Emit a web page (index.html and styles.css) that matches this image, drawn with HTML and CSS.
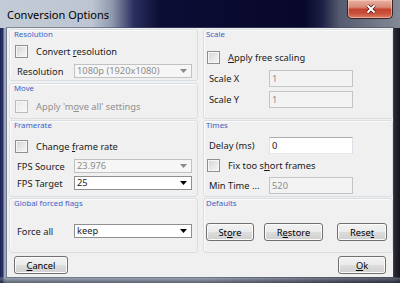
FILE: index.html
```html
<!DOCTYPE html>
<html lang="en">
  <head>
    <meta charset="UTF-8" />
    <title>Conversion Options</title>
    <link rel="stylesheet" href="styles.css">
  </head>
  <body>
    <div class="window">
      <div class="titlebar">
        <span class="title">Conversion Options</span>
        <button class="btn-close">
          <svg width="12" height="10" viewBox="0 0 12 10">
            <path d="M2.5 1.5 L9.5 8.5 M9.5 1.5 L2.5 8.5" stroke="#4a1a12" stroke-width="3.6" />
            <path d="M2.5 1.5 L9.5 8.5 M9.5 1.5 L2.5 8.5" stroke="#fff" stroke-width="2" />
          </svg>
        </button>
      </div>
      <div class="client">
        <div class="groups">
          <div class="col">
            <section class="group g-res">
              <h3>Resolution</h3>
              <label class="check"><span class="box"></span><span>Convert <u>r</u>esolution</span></label>
              <div class="field">
                <span class="lbl">Resolution</span>
                <div class="combo disabled">
                  <span>1080p (1920x1080)</span>
                  <svg width="7" height="4" viewBox="0 0 7 4"><path d="M0 0 H7 L3.5 4 Z" /></svg>
                </div>
              </div>
            </section>
            <section class="group g-move">
              <h3>Move</h3>
              <label class="check disabled"><span class="box"></span><span>Apply 'm<u>o</u>ve all' settings</span></label>
            </section>
          </div>
          <section class="group right g-scale">
            <h3>Scale</h3>
            <label class="check"><span class="box"></span><span><u>A</u>pply free scaling</span></label>
            <div class="field">
              <span class="lbl">Scale X</span>
              <div class="input disabled">1</div>
            </div>
            <div class="field">
              <span class="lbl">Scale Y</span>
              <div class="input disabled">1</div>
            </div>
          </section>
          <section class="group g-frame">
            <h3>Framerate</h3>
            <label class="check"><span class="box"></span><span>Change <u>f</u>rame rate</span></label>
            <div class="field">
              <span class="lbl">FPS Source</span>
              <div class="combo disabled">
                <span>23.976</span>
                <svg width="7" height="4" viewBox="0 0 7 4"><path d="M0 0 H7 L3.5 4 Z" /></svg>
              </div>
            </div>
            <div class="field">
              <span class="lbl">FPS Target</span>
              <div class="combo">
                <span>25</span>
                <svg width="7" height="4" viewBox="0 0 7 4"><path d="M0 0 H7 L3.5 4 Z" /></svg>
              </div>
            </div>
          </section>
          <section class="group right g-times">
            <h3>Times</h3>
            <div class="field">
              <span class="lbl">Delay (ms)</span>
              <div class="input">0</div>
            </div>
            <label class="check"><span class="box"></span><span>Fix too s<u>h</u>ort frames</span></label>
            <div class="field">
              <span class="lbl">Min Time ...</span>
              <div class="input disabled">520</div>
            </div>
          </section>
          <section class="group g-flags">
            <h3>Global forced flags</h3>
            <div class="field">
              <span class="lbl">Force all</span>
              <div class="combo">
                <span>keep</span>
                <svg width="7" height="4" viewBox="0 0 7 4"><path d="M0 0 H7 L3.5 4 Z" /></svg>
              </div>
            </div>
          </section>
          <section class="group right g-defaults">
            <h3>Defaults</h3>
            <div class="btn-row">
              <button class="btn btn-store">St<u>o</u>re</button>
              <button class="btn btn-restore">R<u>e</u>store</button>
              <button class="btn btn-reset">Rese<u>t</u></button>
            </div>
          </section>
        </div>
        <div class="footer">
          <button class="btn btn-cancel"><u>C</u>ancel</button>
          <button class="btn btn-ok"><u>O</u>k</button>
        </div>
      </div>
    </div>
  </body>
</html>
```

FILE: styles.css
```css
* {
  box-sizing: border-box;
}
html,
body {
  margin: 0;
  padding: 0;
  background: #7b8290;
  overflow: hidden;
}
body {
  font-family: "Noto Sans", "Open Sans", sans-serif;
  font-size: 9.3px;
  color: #1a1a1a;
}
u {
  text-underline-offset: 1px;
  text-decoration-thickness: 1px;
}

/* window frame */
.window {
  width: 400px;
  height: 283px;
  display: flex;
  flex-direction: column;
  background:
    linear-gradient(to right, #c3cbd6 0, #bcc5d1 92px, #8f99ae 112px, #2a2f5e 134px, #0c0d35 160px, #08082a 305px, #1d2044 322px, #565c70 340px, #838a96 400px) 0 0 / 100% 28px no-repeat,
    linear-gradient(to bottom, transparent 277px, rgba(140, 148, 160, 0.5) 278px, rgba(40, 44, 60, 0.6) 283px),
    linear-gradient(to right, #1d2458 0, #2a3268 3px, #97a1b1 4px, #aab3c0 7px, #a6afbc 50%, #2d2d3a 393px, #15151d 400px);
}
.titlebar {
  height: 28px;
  display: flex;
  justify-content: space-between;
  align-items: flex-start;
  padding: 0 7px;
}
.title {
  margin-top: 8px;
  font-size: 11px;
  line-height: 14px;
  color: #000;
}
.btn-close {
  width: 46px;
  height: 19px;
  padding: 0;
  border: 1px solid #3b2424;
  border-top: 0;
  border-radius: 0 0 5px 5px;
  background: linear-gradient(#e9b0a2 0, #d88b78 40%, #c4432f 52%, #c9503b 75%, #e07e66 100%);
  box-shadow: inset 0 0 0 1px rgba(255, 220, 210, 0.5);
  display: flex;
  justify-content: center;
  align-items: center;
}
.btn-close svg {
  margin-left: 2px;
}

/* client area */
.client {
  flex: 1;
  margin: 0 7px 6px;
  background: #f0f0f0;
  box-shadow: 0 0 0 1px rgba(70, 80, 100, 0.55);
  display: flex;
  flex-direction: column;
}
.groups {
  margin: 1px 1px 0 2px;
  display: grid;
  grid-template-columns: 189px 190px;
  grid-template-rows: 90px 77px 55px;
  column-gap: 5px;
  row-gap: 1px;
}
.col {
  display: flex;
  flex-direction: column;
  gap: 2px;
}
.group {
  display: flex;
  flex-direction: column;
  padding: 0 5px;
  border: 1px solid #d9dee3;
  border-radius: 3px;
  box-shadow: inset 1px 1px #fbfbfb;
}
.group.right {
  padding: 0 5px 0 3px;
}
.group h3 {
  margin: 0 0 0 -1px;
  height: 8px;
  font-size: 7.8px;
  line-height: 8px;
  font-weight: normal;
  color: #3b62c8;
}
.g-res {
  height: 52px;
}
.g-move {
  height: 36px;
}

/* rows */
.check {
  display: flex;
  align-items: center;
  height: 14px;
  gap: 8px;
  white-space: nowrap;
}
.check.disabled {
  color: #8f8f8f;
}
.box {
  width: 13px;
  height: 13px;
  border: 1px solid #8e8f8f;
  background: linear-gradient(135deg, #d4d4d4, #f9f9f9);
  box-shadow: inset 0 0 0 1px #f6f6f6;
}
.check.disabled .box {
  border-color: #bcbcbc;
  background: linear-gradient(135deg, #e6e6e6, #fafafa);
}
.field {
  display: flex;
  align-items: center;
}
.lbl {
  width: 59px;
  padding-left: 2px;
  white-space: nowrap;
}
.right .lbl {
  width: 62px;
}
.combo {
  width: 118px;
  height: 14px;
  padding: 0 4px 0 2px;
  display: flex;
  justify-content: space-between;
  align-items: center;
  background: #fff;
  border: 1px solid #8f8f8f;
  line-height: 12px;
}
.combo svg path {
  fill: #000;
}
.combo.disabled {
  background: #f6f6f6;
  border-color: #c2c2c2;
  color: #8d8d8d;
}
.combo.disabled svg path {
  fill: #8a8a8a;
}
.input {
  width: 84px;
  height: 17px;
  padding-left: 2px;
  line-height: 15px;
  background: #fff;
  border: 1px solid #abadb3;
  border-color: #abadb3 #dbdfe6 #e3e9ef #e2e3ea;
}
.input.disabled {
  background: #f3f3f3;
  border: 1px solid #c4c4c4;
  color: #8d8d8d;
}

/* vertical placement per group */
.g-res .check {
  margin-top: 6px;
}
.g-res .field {
  margin-top: 6px;
}
.g-move .check {
  margin-top: 7px;
}
.g-scale .check {
  margin-top: 12px;
}
.g-scale .field {
  margin-top: 4px;
}
.g-scale .check + .field {
  margin-top: 6px;
}
.g-frame .check {
  margin-top: 10px;
}
.g-frame .field {
  margin-top: 3px;
}
.g-frame .check + .field {
  margin-top: 6px;
}
.g-times .field {
  margin-top: 8px;
}
.g-times .check {
  margin-top: 4px;
}
.g-times .check + .field {
  margin-top: 5px;
}
.g-flags .field {
  margin-top: 17px;
}
.btn-row {
  margin-top: 16px;
  display: flex;
  gap: 10px;
}

/* buttons */
.btn {
  height: 18px;
  padding: 0;
  font-family: inherit;
  font-size: 9.3px;
  color: #000;
  border: 1px solid #707070;
  border-radius: 3px;
  background: linear-gradient(#f2f2f2 0, #ebebeb 48%, #dddddd 52%, #cfcfcf 100%);
  box-shadow: inset 0 0 0 1px #fbfbfb;
}
.btn-store {
  width: 48px;
  margin-left: -1px;
}
.btn-restore {
  width: 59px;
}
.btn-reset {
  width: 50px;
  margin-left: auto;
}
.footer {
  display: flex;
  justify-content: space-between;
  padding: 3px 7px 0;
}
.btn-cancel {
  width: 54px;
}
.btn-ok {
  width: 48px;
}
```
